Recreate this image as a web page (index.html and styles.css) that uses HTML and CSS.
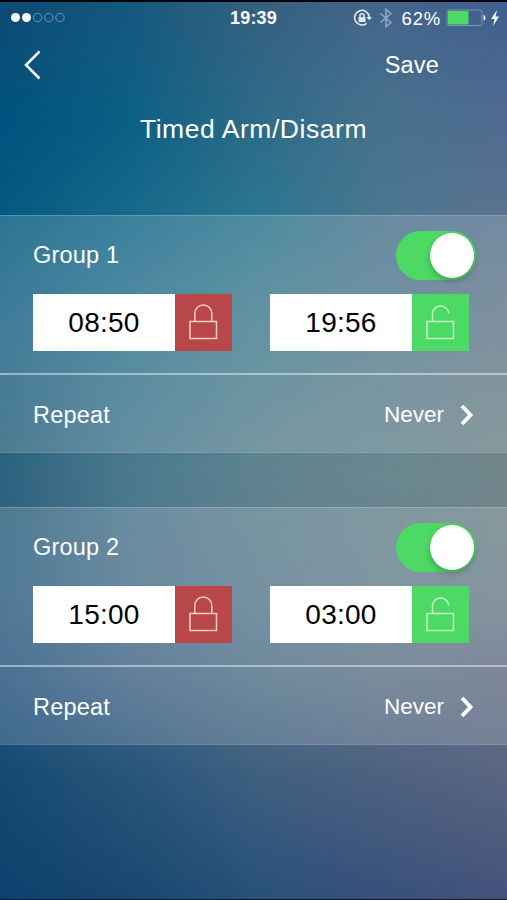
FILE: index.html
```html
<!DOCTYPE html>
<html lang="en">
<head>
<meta charset="utf-8">
<title>Timed Arm/Disarm</title>
<link rel="stylesheet" href="styles.css">
</head>
<body>
<svg width="0" height="0" class="symbols" aria-hidden="true">
  <symbol id="locked" viewBox="0 0 57 57"><path d="M15 27.500h26.500v17H15zM19.800 27V19.500a8.500 8.500 0 0 1 17 0v7.500"/></symbol>
  <symbol id="unlocked" viewBox="0 0 57 57"><path d="M15 27.500h26.500v17H15zM20.500 27V19a8.200 8.200 0 0 1 16.300 .500"/></symbol>
  <symbol id="next" viewBox="0 0 16 24"><path d="M3 3l8.500 9L3 21"/></symbol>
</svg>
<div class="screen">
  <div class="backdrop" aria-hidden="true">
    <div class="wash wash-1"></div><div class="wash wash-2"></div><div class="wash wash-3"></div>
    <div class="wash wash-4"></div><div class="wash wash-5"></div><div class="wash wash-6"></div>
    <div class="wash wash-7"></div><div class="wash wash-8"></div><div class="wash wash-9"></div>
  </div>
  <header class="status">
    <svg class="signal" width="56" height="12" viewBox="0 0 56 12"><g fill="#fff"><circle cx="5.500" cy="5.500" r="4.500"/><circle cx="16.500" cy="5.500" r="4.500"/></g><g fill="none" stroke="#6d9bb8"><circle cx="27.700" cy="5.500" r="4.200"/><circle cx="38.800" cy="5.500" r="4.200"/><circle cx="50" cy="5.500" r="4.200"/></g></svg>
    <span class="clock">19:39</span>
    <div class="indicators">
      <svg width="20" height="18" viewBox="0 0 20 18" fill="none" stroke="#e4edf4" stroke-width="1.500"><path d="M13.600 14.300A7.300 7.300 0 1 1 16.200 8"/><path d="M13.500 8h5.500l-2.700 3.300z" fill="#e4edf4" stroke="none"/><path d="M5.500 8.200h7v4.800h-7z" fill="#e4edf4" stroke="none"/><path d="M7 8.500V6.700a2 2 0 0 1 4 0v1.800"/></svg>
      <svg class="bluetooth" width="14" height="20" viewBox="0 0 14 20" fill="none" stroke="#8ca8c1" stroke-width="1.600"><path d="M1.500 5.500l10.500 9L7 18.700V1.300l5 4.200-10.500 9"/></svg>
      <span class="percent">62%</span>
      <svg width="40" height="18" viewBox="0 0 40 18"><rect x="1" y="1" width="35" height="15.500" rx="2" fill="none" stroke="#7896b4"/><path d="M2 2h20.500v13.500H2z" fill="#4cd964"/><path d="M37.500 6q2 0 2 2.700t-2 2.700z" fill="#e7eef5"/></svg>
      <svg class="bolt" width="8" height="16" viewBox="0 0 8 16"><path d="M6 0L0 9h3.500L2 16l6-9.500H4.500z" fill="#fff"/></svg>
    </div>
  </header>
  <nav class="nav">
    <svg width="20" height="32" viewBox="0 0 20 32" fill="none" stroke="#fff" stroke-width="2.500"><path d="M17.500 2.500L4 16l13.500 13.500"/></svg>
    <span class="save">Save</span>
  </nav>
  <h1>Timed Arm/Disarm</h1>
  <section class="group">
    <div class="schedule">
      <div class="row"><span class="name">Group 1</span><div class="switch"><div class="knob"></div></div></div>
      <div class="times">
        <div class="time"><span>08:50</span><svg class="arm"><use href="#locked"/></svg></div>
        <div class="time"><span>19:56</span><svg class="disarm"><use href="#unlocked"/></svg></div>
      </div>
    </div>
    <div class="repeat"><span class="name">Repeat</span><span class="value">Never</span><svg class="chevron"><use href="#next"/></svg></div>
  </section>
  <section class="group">
    <div class="schedule">
      <div class="row"><span class="name">Group 2</span><div class="switch"><div class="knob"></div></div></div>
      <div class="times">
        <div class="time"><span>15:00</span><svg class="arm"><use href="#locked"/></svg></div>
        <div class="time"><span>03:00</span><svg class="disarm"><use href="#unlocked"/></svg></div>
      </div>
    </div>
    <div class="repeat"><span class="name">Repeat</span><span class="value">Never</span><svg class="chevron"><use href="#next"/></svg></div>
  </section>
</div>
</body>
</html>
```
FILE: styles.css
```css
* { box-sizing: border-box; }
body { margin: 0; }
.symbols { display: none; }
.screen {
  position: relative;
  width: 507px;
  height: 900px;
  overflow: hidden;
  isolation: isolate;
  border-top: 2px solid #02060b;
  border-bottom: 1px solid #10182a;
  font-family: "Liberation Sans", Arial, sans-serif;
  color: #fff;
}
/* Horizontal colour washes, each fading in over the one above it. */
.backdrop { position: absolute; inset: 0; z-index: -1; }
.wash {
  position: absolute;
  inset: var(--top) 0 0;
  background: linear-gradient(90deg, var(--colors));
  -webkit-mask-image: linear-gradient(transparent, #000 var(--fade));
  mask-image: linear-gradient(transparent, #000 var(--fade));
}
.wash-1 { --top: 0; --fade: 0; --colors: #0d4b75, #15587e, #34607f, #44658c, #3f5f8f; -webkit-mask: none; mask: none; }
.wash-2 { --top: 0; --fade: 125px; --colors: #00537e, #0b6085, #2c6c88, #47728c, #506c90; }
.wash-3 { --top: 125px; --fade: 88px; --colors: #045a80, #17698a, #2a768f, #4b7690, #5a7490; }
.wash-4 { --top: 213px; --fade: 107px; --colors: #1c6486, #31758f, #467f91, #577e90, #667c8c; }
.wash-5 { --top: 320px; --fade: 150px; --colors: #2d627d, #4b798f, #5e838f, #69878f, #71878b; }
.wash-6 { --top: 470px; --fade: 130px; --colors: #2f5f83, #4d738c, #5c7c91, #68818f, #6e7f8c; }
.wash-7 { --top: 600px; --fade: 80px; --colors: #28557d, #416688, #527289, #5f758a, #646f85; }
.wash-8 { --top: 680px; --fade: 90px; --colors: #154a71, #28557b, #3e607f, #4e6281, #5a6682; }
.wash-9 { --top: 770px; --fade: 127px; --colors: #0e406d, #17466f, #28507a, #375079, #43527a; }

.status {
  display: grid;
  grid-template-columns: 1fr auto 1fr;
  align-items: center;
  height: 32px;
  padding: 0 8px 0 10px;
}
.clock { margin-left: -2px; font-size: 18px; font-weight: 700; letter-spacing: .15px; }
.indicators { display: flex; align-items: center; justify-content: flex-end; }
.bluetooth { margin-left: 6px; }
.percent { margin: 1px 5px 0 9px; font-size: 18.500px; letter-spacing: .8px; }
.bolt { margin-left: 5px; }
.nav {
  display: flex;
  align-items: center;
  justify-content: space-between;
  height: 62px;
  padding: 0 68px 0 22px;
}
.save { font-size: 23.500px; letter-spacing: .2px; }
h1 {
  height: 119px;
  margin: 0;
  padding-top: 17px;
  font-size: 26.500px;
  line-height: 32px;
  letter-spacing: .550px;
  font-weight: 400;
  text-align: center;
}
.group {
  height: 238px;
  margin-bottom: 54px;
  background: rgba(255, 255, 255, .16);
  border-top: 1px solid rgba(255, 255, 255, .2);
  border-bottom: 1px solid rgba(255, 255, 255, .1);
}
.schedule {
  height: 159px;
  padding: 15px 31px 0 33px;
  border-bottom: 2px solid rgba(255, 255, 255, .45);
}
.row { display: flex; align-items: center; justify-content: space-between; height: 49px; }
.name { font-size: 23.500px; letter-spacing: .2px; }
.switch { display: flex; justify-content: flex-end; width: 80px; height: 49px; padding: 2px; border-radius: 25px; background: #4cd964; }
.knob { width: 44px; height: 45px; border-radius: 50%; background: #fff; box-shadow: 0 3px 6px rgba(0, 0, 0, .25); }
.times { display: flex; gap: 38px; margin-top: 14px; }
.time { display: flex; width: 199px; height: 57px; background: #fff; color: #000; font-size: 28px; letter-spacing: .250px; }
.time span { flex: 1; line-height: 58px; text-align: center; }
.time svg { width: 57px; height: 57px; fill: none; stroke: #f8cfc6; stroke-width: 1.500; }
.arm { background: #b94649; }
.time .disarm { background: #4cd964; stroke: #c6f7c2; }
.repeat { display: flex; align-items: center; height: 77px; padding: 3px 31px 0 33px; }
.value { margin-left: auto; font-size: 22.500px; }
.chevron { width: 16px; height: 24px; margin: 0 1px 0 15px; fill: none; stroke: #fff; stroke-width: 3.900; }
```
